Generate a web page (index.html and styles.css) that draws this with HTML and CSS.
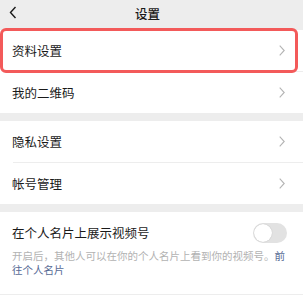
FILE: index.html
```html
<!DOCTYPE html>
<html lang="zh-CN">
<head>
<meta charset="utf-8">
<link rel="stylesheet" href="styles.css">
</head>
<body>
<div class="page">
  <header class="nav">
    <svg class="back" width="8" height="13" viewBox="0 0 8 13"><path d="M6.5 1 L1.5 6.5 L6.5 12" fill="none" stroke="#1a1a1a" stroke-width="1.4"/></svg>
    <div class="title">设置</div>
  </header>
  <section class="group">
    <div class="row highlight-wrap">
      <span class="label">资料设置</span>
      <svg class="chev" width="6" height="11" viewBox="0 0 6 11"><path d="M0.7 0.7 L5.2 5.5 L0.7 10.3" fill="none" stroke="#b4b4b4" stroke-width="1.1"/></svg>
      <div class="highlight"></div>
    </div>
    <div class="divider"></div>
    <div class="row">
      <span class="label">我的二维码</span>
      <svg class="chev" width="6" height="11" viewBox="0 0 6 11"><path d="M0.7 0.7 L5.2 5.5 L0.7 10.3" fill="none" stroke="#b4b4b4" stroke-width="1.1"/></svg>
    </div>
  </section>
  <section class="group">
    <div class="row">
      <span class="label">隐私设置</span>
      <svg class="chev" width="6" height="11" viewBox="0 0 6 11"><path d="M0.7 0.7 L5.2 5.5 L0.7 10.3" fill="none" stroke="#b4b4b4" stroke-width="1.1"/></svg>
    </div>
    <div class="divider"></div>
    <div class="row">
      <span class="label">帐号管理</span>
      <svg class="chev" width="6" height="11" viewBox="0 0 6 11"><path d="M0.7 0.7 L5.2 5.5 L0.7 10.3" fill="none" stroke="#b4b4b4" stroke-width="1.1"/></svg>
    </div>
  </section>
  <section class="group card">
    <div class="card-top">
      <span class="label">在个人名片上展示视频号</span>
      <div class="toggle"><div class="knob"></div></div>
    </div>
    <p class="desc">开启后，其他人可以在你的个人名片上看到你的视频号。<span class="link">前</span><span class="link">往个人名片</span></p>
  </section>
</div>
</body>
</html>
```
FILE: styles.css
```css
* { box-sizing: border-box; }
html, body {
  margin: 0;
  padding: 0;
  background: #ededed;
  font-family: "Noto Sans CJK SC", "Noto Sans", sans-serif;
  color: #1a1a1a;
}
.page {
  width: 303px;
  height: 295px;
  overflow: hidden;
}
.nav {
  height: 30px;
  display: flex;
  align-items: center;
  justify-content: center;
  position: relative;
}
.back {
  position: absolute;
  left: 9px;
  top: 6px;
}
.title {
  font-size: 12.5px;
  font-weight: 500;
  margin-left: -8px;
  margin-top: -3px;
}
.group {
  background: #fff;
  margin-bottom: 8px;
}
.row {
  height: 41px;
  display: flex;
  align-items: center;
  justify-content: space-between;
  padding: 0 18px 0 12px;
}
.highlight-wrap { position: relative; }
.highlight {
  position: absolute;
  left: 0;
  top: -2px;
  width: 298px;
  height: 45px;
  border: 3px solid #f35a5a;
  border-radius: 6px;
}
.label {
  font-size: 12.5px;
  line-height: 20px;
  color: #1a1a1a;
}
.chev { display: block; }
.divider {
  height: 1px;
  margin-left: 13px;
  background: #ededed;
}
.card {
  padding: 11px 16px 17px 12px;
}
.card-top {
  display: flex;
  align-items: center;
  justify-content: space-between;
  height: 20px;
}
.toggle {
  width: 34px;
  height: 20px;
  border-radius: 10px;
  background: #e2e2e2;
  position: relative;
}
.knob {
  position: absolute;
  left: 1px;
  top: 1px;
  width: 18px;
  height: 18px;
  border-radius: 50%;
  background: #fff;
  box-shadow: 0 0 1px rgba(0,0,0,0.25);
}
.desc {
  margin: 6px 0 0;
  font-size: 10.5px;
  line-height: 14px;
  color: #b2b2b2;
}
.link { color: #576b95; }
```
